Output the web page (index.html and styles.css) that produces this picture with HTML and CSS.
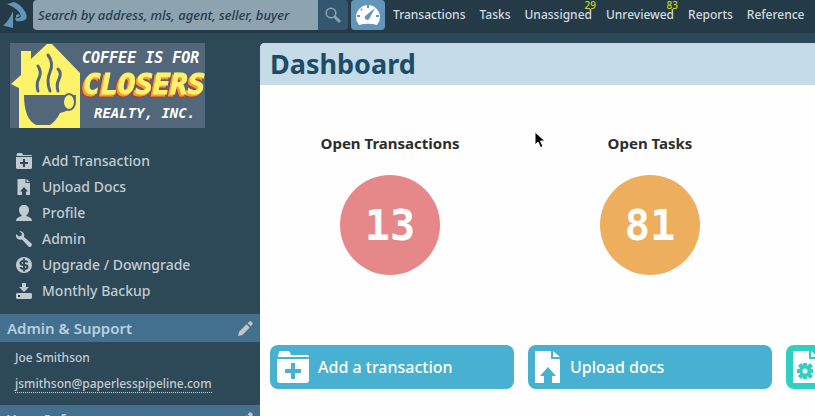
FILE: index.html
```
<!DOCTYPE html>
<html lang="en">
<head>
<meta charset="utf-8">
<meta name="viewport" content="width=device-width, initial-scale=1">
<title>Dashboard</title>
<link rel="stylesheet" href="styles.css">
</head>
<body>
<svg class="symbols" aria-hidden="true">
  <symbol id="folder" viewBox="0 0 32 32"><path d="M1 5 2 1Q2.300 0 3.500 0H11Q12.500 0 13 1.500L14 4H30Q32 4 32 6H1ZM0 8H32V29Q32 32 29 32H3Q0 32 0 29ZM14 12V18H8V22H14V28H18V22H24V18H18V12Z" fill-rule="evenodd"/></symbol>
  <symbol id="upload" viewBox="0 0 26 32"><path d="M0 0H16V8H25V32H17V25H21L13 16 5 25H9V32H0ZM18 0 25 6H18Z"/></symbol>
  <symbol id="user" viewBox="0 0 16 16"><path d="M8 0C11 0 13 2 13 5 13 7.500 12 9 10.500 10V11L14 12.500Q16 13.500 16 16H0Q0 13.500 2 12.500L5.500 11V10C4 9 3 7.500 3 5 3 2 5 0 8 0Z"/></symbol>
  <symbol id="wrench" viewBox="0 0 16 16"><path d="M3 0Q7 0 8 3 8.500 4.500 8 6L15.500 12.500Q16.500 14 15 15.500 13.500 16.500 12.500 15.500L6 8.500Q1.500 9.500 0 5.500V3L3 5.500 5.500 4.500 6 2.500Z"/></symbol>
  <symbol id="pencil" viewBox="0 0 14 14"><path d="M0 14 1 10 8 3 11 6 4 13ZM9 2 10.500.500Q12 0 13 1 14 2 13.500 3.500L12 5Z"/></symbol>
</svg>

<header class="topbar">
  <a class="brand" href="#" aria-label="Home">
    <svg viewBox="0 0 28 30" width="28" height="30"><path fill="#6295b8" d="M7 4 14 2Q20 4 24 10 28 16 26 19 23 22 16 21L15 18Q20 19 21 16 19 9 7 4ZM13 11V28L3 25.500Q9 21 13 11ZM16 15 19 14 20 16 16 18Z"/></svg>
  </a>
  <form class="search">
    <input type="search" aria-label="Search" placeholder="Search by address, mls, agent, seller, buyer">
    <button type="button" aria-label="Search">
      <svg viewBox="0 0 17 17" width="17" height="17"><circle cx="6" cy="6" r="4.800" fill="none" stroke="#8aa1ae" stroke-width="1.600"/><path d="M9.500 9.500 15 15" stroke="#8aa1ae" stroke-width="3"/></svg>
    </button>
  </form>
  <a class="gauge" href="#" aria-label="Dashboard">
    <svg viewBox="0 0 26 24" width="26" height="24"><path fill="#fff" d="M4 22A12 12 0 1 1 22 22Q13 19.500 4 22Z"/><path fill="none" stroke="#6295b8" stroke-width="2" d="M13 2V5M2 13H5M21 13H24M6 6 7 7"/><path fill="#6295b8" d="M20 5 14.500 15.500A2.500 2.500 0 1 1 11.500 12Z"/></svg>
  </a>
  <nav class="nav" aria-label="Main">
    <a href="#">Transactions</a>
    <a href="#">Tasks</a>
    <a href="#">Unassigned<span class="count">29</span></a>
    <a href="#">Unreviewed<span class="count">83</span></a>
    <a href="#">Reports</a>
    <a href="#">Reference</a>
  </nav>
</header>

<div class="layout">
  <aside class="sidebar">
    <svg class="logo" viewBox="0 0 195 85" role="img" aria-label="Coffee Is For Closers Realty, Inc.">
      <rect width="195" height="85" fill="#53677b"/>
      <path fill="#fdf36b" d="M11 8H21V16L37 1H42L70 30V85H9V45L1 41 11 32Z"/>
      <path fill="#53677b" d="M14 52H66Q66 67 50 70 46 78 40 82H26Q14 76 14 52Z"/>
      <ellipse cx="59" cy="59" rx="6" ry="8" fill="#fdf36b" stroke="#53677b" stroke-width="2"/>
      <path fill="none" stroke="#53677b" stroke-width="3" stroke-linecap="round" d="M28 23Q32 29 29 35T28 48M38 12Q44 20 40 29T40 48M48 26Q52 30 49 36T48 48"/>
      <g class="logo-type">
        <text x="72" y="20" font-size="15" fill="#fff">COFFEE IS FOR</text>
        <text class="logo-main" x="73" y="51" font-size="29">CLOSERS</text>
        <text x="84" y="75" font-size="14" fill="#fff">REALTY, INC.</text>
      </g>
    </svg>

    <ul class="menu">
      <li><a href="#"><svg><use href="#folder"/></svg>Add Transaction</a></li>
      <li><a href="#"><svg><use href="#upload"/></svg>Upload Docs</a></li>
      <li><a href="#"><svg><use href="#user"/></svg>Profile</a></li>
      <li><a href="#"><svg><use href="#wrench"/></svg>Admin</a></li>
      <li><a href="#"><svg viewBox="0 0 16 16"><circle cx="8" cy="8" r="8"/><path class="cutout" d="M11.500 5.500Q11 4 8 4 4.500 4 4.500 6T8 8 11.500 10 8 12Q5 12 4.500 10M8 1.500V14.500"/></svg>Upgrade / Downgrade</a></li>
      <li><a href="#"><svg viewBox="0 0 16 16"><path d="M6 0H10V4H13L8 9 3 4H6ZM1 10H15L16 11V15L15 16H1L0 15V11ZM2 12V14H4V12Z" fill-rule="evenodd"/></svg>Monthly Backup</a></li>
    </ul>

    <section class="panel">
      <h2>Admin &amp; Support <button type="button" aria-label="Edit Admin &amp; Support"><svg><use href="#pencil"/></svg></button></h2>
      <div class="panel-body">
        <p>Joe Smithson</p>
        <p><a href="#">jsmithson@paperlesspipeline.com</a></p>
      </div>
    </section>
    <section class="panel">
      <h2>Your Info <button type="button" aria-label="Edit Your Info"><svg><use href="#pencil"/></svg></button></h2>
    </section>
  </aside>

  <main class="main">
    <h1>Dashboard</h1>
    <div class="metrics">
      <section class="metric"><h3>Open Transactions</h3><a class="disc red" href="#">13</a></section>
      <section class="metric"><h3>Open Tasks</h3><a class="disc orange" href="#">81</a></section>
    </div>
    <div class="actions">
      <a class="action" href="#"><svg class="wide"><use href="#folder"/></svg>Add a transaction</a>
      <a class="action" href="#"><svg><use href="#upload"/></svg>Upload docs</a>
      <a class="action teal" href="#" aria-label="Document settings"><svg viewBox="0 0 26 32"><path d="M0 0H16V8H25V32H0ZM18 0 25 6H18Z"/><g fill="#2fcfc2"><circle cx="12" cy="20" r="6"/><path d="M10 12H14V28H10ZM4 18H20V22H4ZM5 15 8 12 20 25 17 28ZM17 12 20 15 8 28 5 25Z"/></g><circle cx="12" cy="20" r="2.500"/></svg></a>
    </div>
    <svg class="pointer" viewBox="0 0 12 18" width="12" height="18" aria-hidden="true"><path d="M1 1V14L4 11 6.500 16.500 9 15.500 6.500 10H11Z" stroke="#fff"/></svg>
  </main>
</div>
</body>
</html>
```
FILE: styles.css
```
* { box-sizing: border-box; }
html, body { height: 100%; }
body {
  margin: 0;
  display: flex;
  flex-direction: column;
  overflow: hidden;
  background: #2d4856;
  color: #c3ccd3;
  font: 500 14px/26px "Noto Sans", "Open Sans", sans-serif;
}
a { color: inherit; text-decoration: none; }
h1, h2, h3, p, ul { margin: 0; padding: 0; }
button { border: 0; padding: 0; }
svg { display: block; flex: none; }
.symbols { position: absolute; width: 0; height: 0; }

.topbar {
  display: flex;
  flex: none;
  height: 33px;
  background: #253a47;
}
.brand { width: 33px; }
.search { display: flex; width: 315px; height: 30px; }
.search input {
  flex: 1;
  min-width: 0;
  padding: 0 5px;
  border: 0;
  border-radius: 4px 0 0 4px;
  background: #8ea3b0;
  color: #243b49;
  font: italic 500 13px "Noto Sans", sans-serif;
}
.search input::placeholder { color: #243b49; opacity: 1; }
.search button {
  display: grid;
  place-items: center;
  width: 30px;
  border-radius: 0 4px 4px 0;
  background: #34576f;
}
.gauge {
  display: grid;
  place-items: center;
  width: 34px;
  height: 30px;
  margin: 0 8px 0 3px;
  border-radius: 4px;
  background: #6295b8;
}
.nav { display: flex; gap: 14px; font-size: 12px; line-height: 30px; color: #d2dae0; white-space: nowrap; }
.nav a { position: relative; }
.count { position: absolute; top: 0; right: -4px; font-size: 10px; line-height: 10px; color: #cdd512; }

.layout { display: flex; flex: 1; min-height: 0; padding-top: 10px; }
.sidebar { flex: none; width: 260px; }
.logo { width: 195px; height: 85px; margin-left: 10px; }
.logo-type { font-family: "DejaVu Sans Mono", monospace; font-weight: bold; font-style: italic; }
.logo-main {
  fill: #fdf36b;
  stroke: #fdf36b;
  filter: drop-shadow(-2px 2px 0 #f39b35) drop-shadow(-1px 1px 0 #b9372b);
}
.menu { margin: 20px 0 10px; list-style: none; }
.menu a { display: flex; align-items: center; gap: 10px; padding-left: 16px; }
.menu svg { width: 16px; height: 16px; fill: #c3c9d0; }
.menu .cutout { fill: none; stroke: #2d4856; stroke-width: 2; }
.panel h2 {
  display: flex;
  align-items: center;
  justify-content: space-between;
  height: 28px;
  padding: 0 7px;
  background: #43708f;
  color: #b9cfdc;
  font-size: 15px;
  font-weight: 600;
}
.panel button { background: none; }
.panel button svg { width: 15px; height: 15px; fill: #c3c5c6; }
.panel-body { height: 63px; padding: 3px 15px; font-size: 12px; }
.panel-body a { display: inline-block; line-height: 16px; border-bottom: 1px dotted; }

.main {
  position: relative;
  flex: 1;
  min-width: 0;
  overflow: hidden;
  border-top-left-radius: 5px;
  background: #fefefe;
}
h1 { padding-left: 10px; background: #c5dbe8; color: #1d4c67; font-size: 27px; line-height: 42px; }
.metrics { display: flex; padding: 45px 0 70px; }
.metric { display: flex; flex-direction: column; align-items: center; gap: 19px; width: 260px; }
h3 { color: #2d2d2d; font-size: 15px; line-height: 26px; }
.disc {
  display: grid;
  place-items: center;
  width: 100px;
  height: 100px;
  border-radius: 50%;
  color: #fff;
  font: bold 42px "DejaVu Sans Mono", monospace;
}
.red { background: #e68889; }
.orange { background: #edae5d; }
.actions { display: flex; gap: 14px; padding-left: 10px; }
.action {
  display: flex;
  align-items: center;
  flex: none;
  gap: 9px;
  width: 244px;
  height: 44px;
  padding: 0 7px;
  border-radius: 8px;
  background: #48b0d0;
  color: #fff;
  font-size: 16px;
}
.action svg { width: 26px; height: 32px; fill: #fff; }
.action .wide { width: 32px; }
.teal { background: #2fcfc2; }
.pointer { position: absolute; left: 274px; top: 88px; }
```
